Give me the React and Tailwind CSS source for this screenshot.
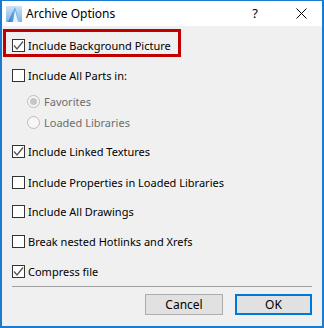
import React from "react";

const font = { fontFamily: '"Noto Sans", "Open Sans", sans-serif' };

const CheckBox = ({ checked }) => (
  <span className="w-[13px] h-[13px] border border-[#333333] bg-white flex items-center justify-center shrink-0">
    {checked && (
      <svg width="11" height="11" viewBox="0 0 11 11">
        <path d="M1 5.5 L4 9 L10 1.5" fill="none" stroke="#555555" strokeWidth="1.3" />
      </svg>
    )}
  </span>
);

const CheckRow = ({ checked, label, className = "" }) => (
  <div className={`h-[20px] flex items-center pl-[10px] gap-[3px] ${className}`}>
    <CheckBox checked={checked} />
    <span className="text-[11px] text-black leading-none whitespace-nowrap">{label}</span>
  </div>
);

const RadioRow = ({ checked, label, className = "" }) => (
  <div className={`h-[20px] flex items-center pl-[25px] gap-[4px] ${className}`}>
    <span className="w-[13px] h-[13px] rounded-full border border-[#bcbcbc] bg-[#f6f6f6] flex items-center justify-center shrink-0">
      {checked && <span className="w-[7px] h-[7px] rounded-full bg-[#c6c6c6]" />}
    </span>
    <span className="text-[11px] text-[#6d6d6d] leading-none whitespace-nowrap">{label}</span>
  </div>
);

const AppIcon = () => (
  <svg width="16" height="16" viewBox="0 0 16 16">
    <defs>
      <linearGradient id="bg" x1="0" y1="0" x2="0" y2="1">
        <stop offset="0" stopColor="#cfe4f7" />
        <stop offset="1" stopColor="#7fb3e6" />
      </linearGradient>
      <linearGradient id="fg" x1="0" y1="0" x2="1" y2="0">
        <stop offset="0" stopColor="#2a7fd8" />
        <stop offset="1" stopColor="#9ccaf4" />
      </linearGradient>
    </defs>
    <rect x="0" y="0" width="16" height="16" fill="url(#bg)" />
    <path d="M2 16 L9 1 L14 16 Z" fill="url(#fg)" />
    <path d="M7 16 L9 4 L12 16 Z" fill="#e8f3fd" />
  </svg>
);

export default function App() {
  return (
    <div
      className="w-[324px] h-[328px] bg-[#f0f0f0] border-x-2 border-b-2 border-t border-[#1b7bd0] flex flex-col"
      style={font}
    >
      <div className="h-[25px] bg-white flex items-center shrink-0">
        <div className="ml-[4px] mt-[1px]">
          <AppIcon />
        </div>
        <span className="ml-[4px] text-[12px] text-black">Archive Options</span>
        <span className="ml-auto text-[13px] text-black mr-[38px]">?</span>
        <svg width="11" height="11" viewBox="0 0 11 11" className="mr-[15px]">
          <path d="M0.5 0.5 L10.5 10.5 M10.5 0.5 L0.5 10.5" stroke="#000" strokeWidth="1" />
        </svg>
      </div>

      <div className="flex flex-col">
        <div className="ml-[1px] mt-[3px] w-[178px] h-[28px] border-[3px] border-[#c00000] pt-[3px]">
          <div className="h-[20px] flex items-center pl-[6px] gap-[3px]">
            <CheckBox checked />
            <span className="text-[11px] text-black leading-none whitespace-nowrap">Include Background Picture</span>
          </div>
        </div>
        <CheckRow label="Include All Parts in:" className="mt-[8px]" />
        <RadioRow checked label="Favorites" className="mt-[6px]" />
        <RadioRow label="Loaded Libraries" className="mt-[1px]" />
        <CheckRow checked label="Include Linked Textures" className="mt-[9px]" />
        <CheckRow label="Include Properties in Loaded Libraries" className="mt-[11px]" />
        <CheckRow label="Include All Drawings" className="mt-[9px]" />
        <CheckRow label="Break nested Hotlinks and Xrefs" className="mt-[10px]" />
        <CheckRow checked label="Compress file" className="mt-[10px]" />
        <div className="mt-[5px] ml-[10px] mr-[10px] h-px bg-[#a0a0a0]" />
        <div className="mt-[7px] flex justify-end gap-[12px] pr-[10px]">
          <button className="w-[78px] h-[21px] bg-[#e1e1e1] border border-[#adadad] text-[12px] text-black leading-none">
            Cancel
          </button>
          <button className="w-[77px] h-[21px] bg-[#e1e1e1] border-2 border-[#0078d7] text-[12px] text-black leading-none">
            OK
          </button>
        </div>
      </div>
    </div>
  );
}
